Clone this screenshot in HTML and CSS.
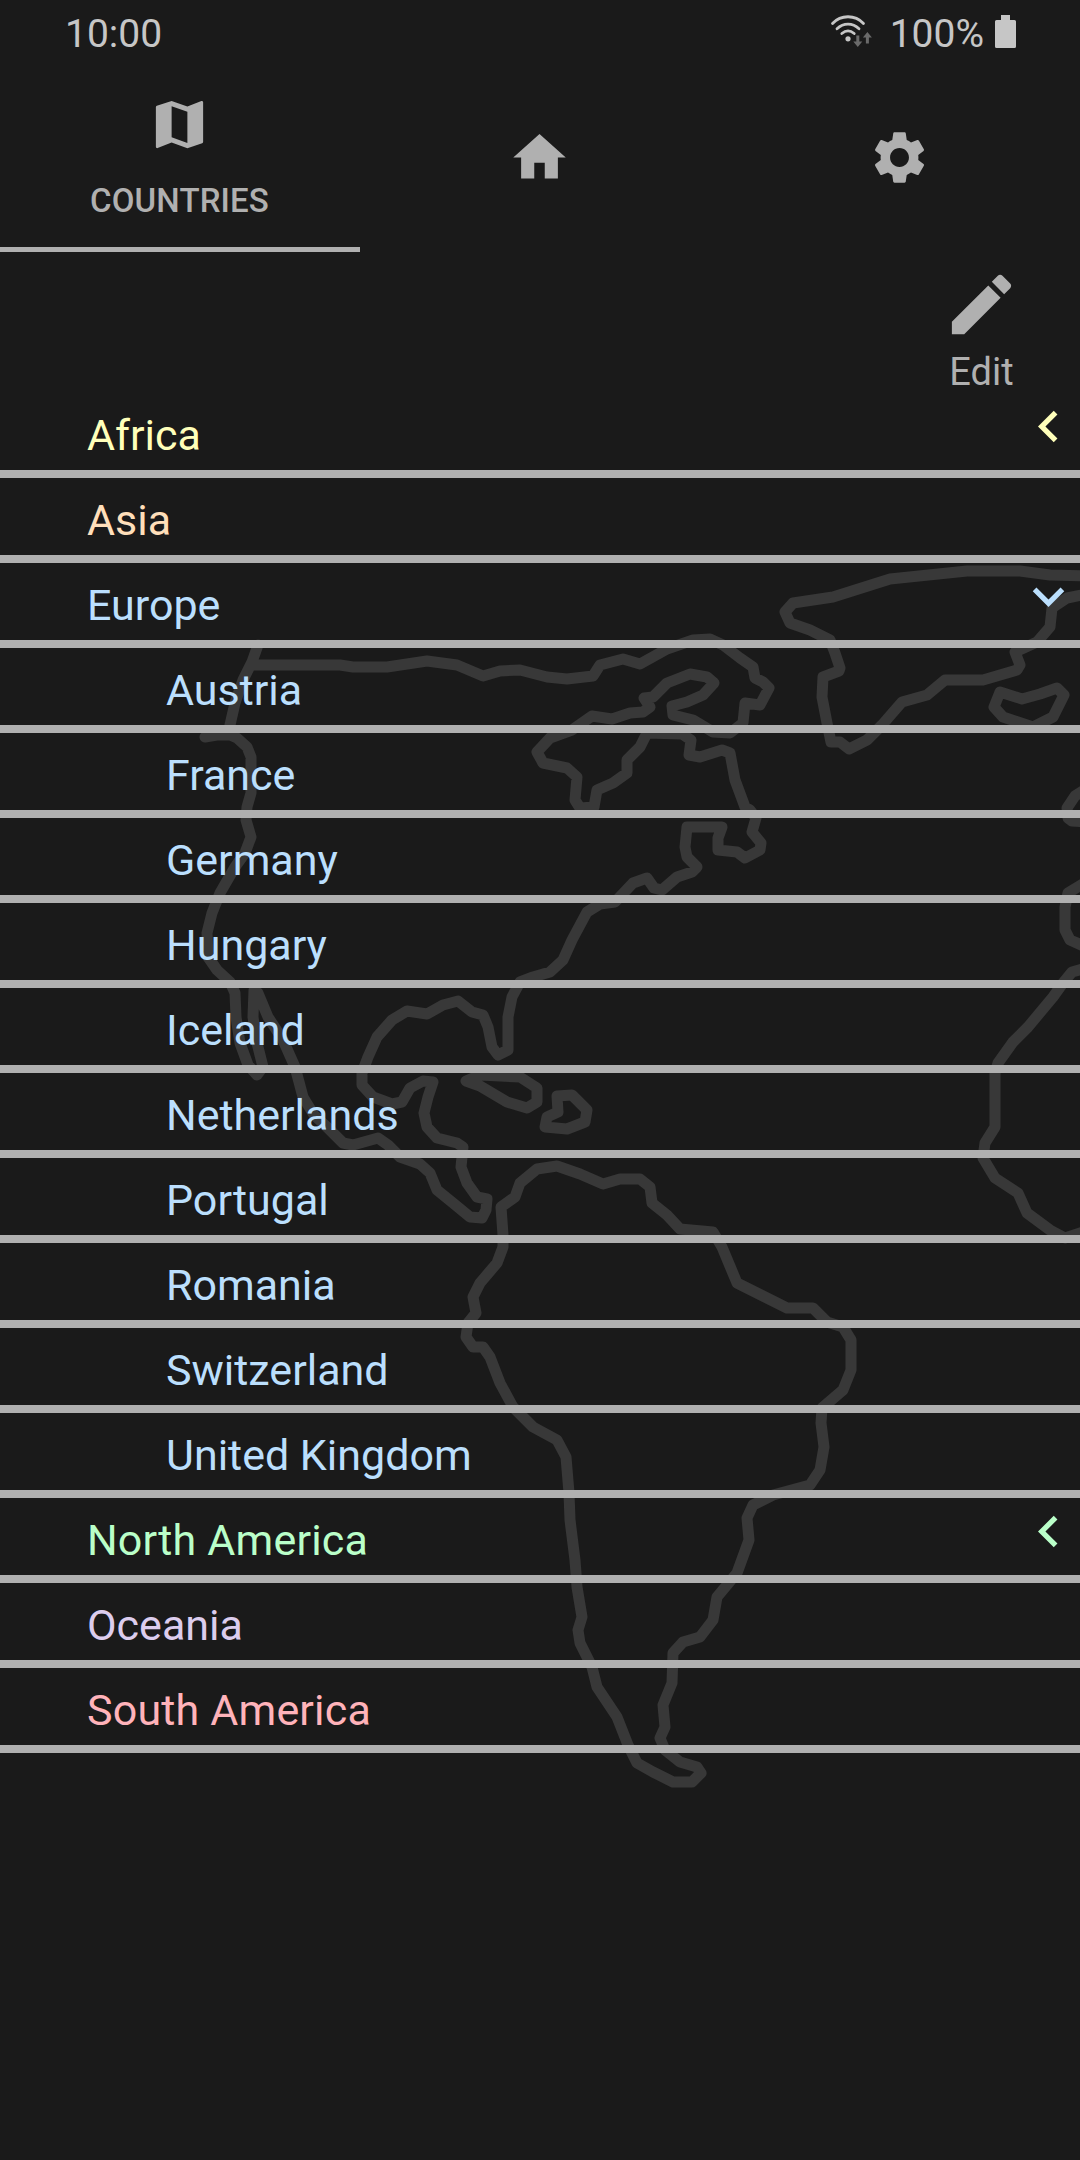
FILE: index.html
```html
<!DOCTYPE html>
<html lang="en">
<head>
<meta charset="utf-8">
<title>Countries</title>
<link rel="stylesheet" href="styles.css">
</head>
<body>
<div class="screen">
  <svg class="world" viewBox="0 0 1080 2160" aria-hidden="true">
    <!-- North and Central America -->
    <path d="M258 645L252 662 243 680 235 703 230 725 228 735 217 735 205 737M228 734L237 738 247 747 251 757 251 793 247 807 246 820 251 837 245 853 235 867 220 893 212 913 207 933 208 957 217 970 230 982 235 993 236 1017 240 1043 248 1065 257 1075 263 1067 257 1043 253 1017 254 990 258 993 268 1017 283 1040 295 1067 303 1097 314 1115 327 1127 343 1143 353 1145 378 1138 388 1145 400 1157 420 1164 430 1173 437 1190 453 1203 470 1217 482 1218 486 1210 487 1199 477 1197 467 1183 461 1167 463 1147 457 1143 437 1138 427 1127 424 1113 428 1097 433 1082 423 1081 410 1088 402 1102 392 1104 373 1097 362 1085 362 1073 368 1057 377 1037 392 1020 407 1011 427 1014 443 1005 458 1001 472 1012 483 1015 488 1027 492 1047 498 1055 508 1050 508 1017 512 997 520 982 533 977 550 972 563 960 572 940 587 912 600 904 615 902 633 883 647 878 654 888 662 890 677 877 692 872 697 867 687 857 685 847 687 827 722 827 718 838 718 850 737 852 745 858 760 850 761 843 752 832 756 818 750 810 745 807 735 780 730 753 722 750 700 757 689 755 691 740 682 734 647 733 640 747 627 760 627 773 613 783 597 790 594 807 580 808 575 800 577 777 567 768 543 763 537 752 550 738 572 730 592 716 612 719 630 713 643 712 650 707 644 698 653 697 667 683 690 674 707 677 714 683 703 695 687 702 672 706 673 715 693 720 713 732 730 733 743 723 745 703 760 705 769 688 763 682 755 678 753 667 740 658 723 645 710 639 693 640 667 649 640 664 623 659 600 665 593 676 567 679 547 677 520 670 500 671 483 676 457 665 427 661 387 667 353 667 340 665 254 665"/>
    <!-- Caribbean islands -->
    <path d="M466 1081L480 1075 520 1077 537 1088 537 1102 527 1108 507 1102 480 1086zM557 1096L572 1095 587 1110 585 1122 567 1129 545 1127 547 1117 558 1112z"/>
    <!-- Greenland and Iceland -->
    <path d="M1086 576L1050 575 1020 571 967 571 890 579 833 597 793 603 785 612 790 623 810 630 830 640 835 653 840 668 839 671 823 677 822 697 827 723 831 742 840 742 849 749 867 740 882 725 902 702 927 695 945 680 983 680 1017 670 1020 665 1015 652 1037 642 1050 627 1052 608 1067 598 1086 594M1000 692L1022 699 1040 694 1057 688 1064 695 1053 717 1033 727 1003 717 994 707z"/>
    <!-- British Isles, Iberia, West Africa -->
    <path d="M1086 789L1075 796 1067 808 1068 818 1072 821 1086 822M1086 882L1068 893 1065 907 1065 930 1070 940 1086 947M1086 968L1072 972 1063 983 1053 997 1028 1027 1013 1042 998 1063 995 1073 995 1127 985 1143 983 1158 995 1178 1018 1193 1027 1213 1050 1230 1065 1238 1086 1231"/>
    <!-- South America -->
    <path d="M503 1235L501 1207 515 1197 520 1183 537 1169 557 1166 580 1174 603 1184 620 1179 640 1179 650 1187 652 1203 667 1215 680 1229 713 1232 722 1247 737 1283 787 1308 813 1308 827 1322 843 1327 851 1340 851 1370 843 1390 822 1408 821 1423 824 1447 820 1470 810 1485 773 1495 753 1505 747 1518 749 1540 737 1573 717 1597 713 1620 700 1637 683 1642 673 1653 672 1683 663 1705 665 1727 660 1738 665 1750 680 1762 697 1767 701 1773 692 1782 673 1782 653 1772 637 1763 628 1745 617 1717 597 1687 592 1667 580 1643 578 1630 582 1617 577 1587 575 1560 570 1520 569 1493 566 1457 557 1440 533 1427 513 1407 500 1383 490 1357 483 1347 473 1347 466 1337 468 1323 476 1313 473 1297 480 1283 497 1263 503 1247z"/>
  </svg>

  <header class="status">
    <span class="clock">10:00</span>
    <span class="indicators">
      <svg class="wifi" viewBox="0 0 44 36" aria-hidden="true">
        <path class="wave" d="M3.500 13C12 4 26 4 34.500 13M8 18.200C14.500 12 23.500 12 30 18.200M12.800 23C17 19.500 21 19.500 25.200 23"/>
        <circle cx="19" cy="28.300" r="2.600"/>
        <path class="traffic" d="M27.300 25h3v6h3l-4.500 5.500-4.500-5.500h3zM36.900 33h3v-6h3l-4.500-5.500-4.500 5.500h3z"/>
      </svg>
      <span class="level">100%</span>
      <svg class="battery" viewBox="0 0 21 33" aria-hidden="true"><path d="M6 0h9v5h4.500a1.500 1.500 0 0 1 1.500 1.500v25a1.500 1.500 0 0 1-1.500 1.500h-18a1.500 1.500 0 0 1-1.500-1.500v-25a1.500 1.500 0 0 1 1.500-1.500h4.500z"/></svg>
    </span>
  </header>

  <nav class="tabs">
    <a class="tab active">
      <svg class="icon" viewBox="0 0 24 24" aria-hidden="true"><path d="M20.500 3l-.16.030L15 5.100 9 3 3.360 4.900c-.21.070-.36.250-.36.480V20.500c0 .28.220.5.500.5l.16-.030L9 18.900l6 2.100 5.640-1.900c.21-.070.360-.25.360-.48V3.500c0-.28-.22-.5-.5-.5zM15 19l-6-2.110V5l6 2.110V19z"/></svg>
      <span>COUNTRIES</span>
    </a>
    <a class="tab"><svg class="icon" viewBox="0 0 24 24" aria-hidden="true"><path d="M10 20v-6h4v6h5v-8h3L12 3 2 12h3v8z"/></svg></a>
    <a class="tab"><svg class="icon" viewBox="0 0 24 24" aria-hidden="true"><path d="M19.140 12.940c.040-.3.060-.61.060-.94 0-.32-.020-.64-.070-.94l2.030-1.580c.18-.14.230-.41.120-.61l-1.920-3.320c-.12-.22-.37-.29-.59-.22l-2.390.96c-.5-.38-1.030-.7-1.620-.94l-.36-2.540c-.040-.24-.24-.41-.48-.41h-3.840c-.24 0-.43.170-.47.410l-.36 2.540c-.59.240-1.130.570-1.620.940l-2.390-.96c-.22-.080-.47 0-.59.220L2.740 8.870c-.12.210-.080.470.12.610l2.030 1.580c-.050.3-.090.630-.090.940s.020.640.070.940l-2.030 1.580c-.18.140-.23.410-.12.610l1.920 3.320c.12.220.37.290.59.220l2.390-.96c.5.380 1.030.7 1.620.94l.36 2.540c.050.240.24.410.48.410h3.840c.24 0 .44-.17.470-.41l.36-2.540c.59-.24 1.130-.56 1.620-.94l2.390.96c.22.080.47 0 .59-.22l1.920-3.320c.12-.22.070-.47-.12-.61l-2.010-1.580zM12 15.600c-1.980 0-3.600-1.620-3.600-3.600s1.620-3.600 3.600-3.600 3.600 1.620 3.600 3.600-1.620 3.600-3.600 3.600z"/></svg></a>
  </nav>

  <div class="toolbar">
    <button class="edit">
      <svg viewBox="0 0 24 24" aria-hidden="true"><path d="M3 17.250V21h3.750L17.810 9.940l-3.750-3.750L3 17.250zM20.710 7.040c.39-.39.390-1.020 0-1.410l-2.340-2.340c-.39-.39-1.020-.39-1.410 0l-1.830 1.830 3.750 3.750 1.830-1.830z"/></svg>
      <span>Edit</span>
    </button>
  </div>

  <ul class="list">
    <li class="row africa"><span>Africa</span><svg class="icon" viewBox="0 0 24 24"><path d="M15.410 7.410L14 6l-6 6 6 6 1.410-1.410L10.830 12z"/></svg></li>
    <li class="row asia"><span>Asia</span></li>
    <li class="row europe"><span>Europe</span><svg class="icon" viewBox="0 0 24 24"><path d="M16.590 8.590L12 13.170 7.410 8.590 6 10l6 6 6-6z"/></svg></li>
    <li class="row europe country"><span>Austria</span></li>
    <li class="row europe country"><span>France</span></li>
    <li class="row europe country"><span>Germany</span></li>
    <li class="row europe country"><span>Hungary</span></li>
    <li class="row europe country"><span>Iceland</span></li>
    <li class="row europe country"><span>Netherlands</span></li>
    <li class="row europe country"><span>Portugal</span></li>
    <li class="row europe country"><span>Romania</span></li>
    <li class="row europe country"><span>Switzerland</span></li>
    <li class="row europe country"><span>United Kingdom</span></li>
    <li class="row north-america"><span>North America</span><svg class="icon" viewBox="0 0 24 24"><path d="M15.410 7.410L14 6l-6 6 6 6 1.410-1.410L10.830 12z"/></svg></li>
    <li class="row oceania"><span>Oceania</span></li>
    <li class="row south-america"><span>South America</span></li>
  </ul>
</div>
</body>
</html>
```
FILE: styles.css
```css
* { box-sizing: border-box; }

body {
  margin: 0;
  background: #1a1a1a;
  font-family: Roboto, "Liberation Sans", sans-serif;
  color: #b0b0b0;
}

svg { display: block; fill: currentColor; flex: none; }

.screen {
  position: relative;
  isolation: isolate;
  width: 1080px;
  height: 2160px;
  overflow: hidden;
  display: flex;
  flex-direction: column;
}

/* backdrop behind the whole screen */
.world {
  position: absolute;
  inset: 0;
  z-index: -1;
  width: 1080px;
  height: 2160px;
  fill: none;
  stroke: #383838;
  stroke-width: 11px;
  stroke-linejoin: round;
  stroke-linecap: round;
}

.status {
  height: 66px;
  padding: 0 64px 0 65px;
  display: flex;
  justify-content: space-between;
  color: #c6c6c6;
  font-size: 39px;
  line-height: 68px;
}

.indicators { display: flex; align-items: flex-start; }
.wifi { width: 44px; height: 37px; margin: 10px 1px 0 0; }
.wave { fill: none; stroke: currentColor; stroke-width: 2.800px; stroke-linecap: round; }
.traffic { fill: #6a6a6a; }
.level { margin-left: 16px; }
.battery { width: 21px; height: 33px; margin: 15px 0 0 11px; }

.icon { width: 63px; height: 63px; }

.tabs { display: grid; grid-template-columns: repeat(3, 1fr); height: 186px; }

.tab {
  display: flex;
  flex-direction: column;
  align-items: center;
  justify-content: center;
  border-bottom: 5px solid transparent;
  padding: 2px 1px 0 0;
  font-size: 33px;
  font-weight: 500;
  line-height: 44px;
  letter-spacing: 0.150px;
}

.tab.active { border-color: #b0b0b0; justify-content: flex-start; padding-top: 27px; gap: 23px; }

.toolbar { height: 141px; display: flex; justify-content: flex-end; padding: 13px 59px 0 0; }

.edit {
  display: flex;
  flex-direction: column;
  align-items: center;
  padding: 0;
  border: 0;
  background: none;
  color: inherit;
  font: 38px/57px Roboto, "Liberation Sans", sans-serif;
}

.edit svg { width: 79px; height: 79px; }

.list { margin: 0; padding: 0; list-style: none; }

.row {
  height: 85px;
  display: flex;
  justify-content: space-between;
  border-bottom: 8px solid #b0b0b0;
  padding: 1px 0 0 87px;
  font-size: 43px;
  line-height: 82px;
}

.row .icon { margin-top: 1px; }
.country { padding-left: 166px; }

.africa { color: #ffffba; }
.asia { color: #ffdfba; }
.europe { color: #bbdffd; }
.north-america { color: #baffc9; letter-spacing: 0.180px; }
.oceania { color: #dccdee; }
.south-america { color: #ffb3ba; letter-spacing: 0.180px; }
```
